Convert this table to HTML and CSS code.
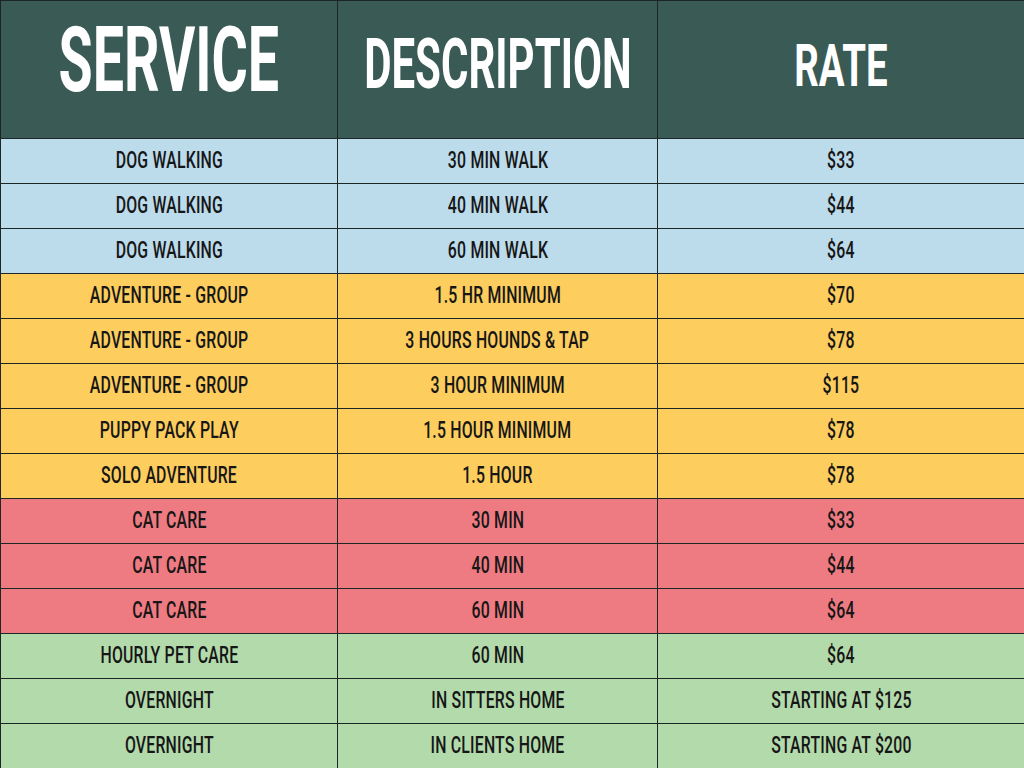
FILE: index.html
```html
<!DOCTYPE html>
<html>
<head>
<meta charset="utf-8">
<link rel="stylesheet" href="styles.css">
</head>
<body>
<div class="table">
  <div class="cell head"><span class="h h-service">SERVICE</span></div>
  <div class="cell head"><span class="h h-desc">DESCRIPTION</span></div>
  <div class="cell head last"><span class="h h-rate">RATE</span></div>

  <div class="cell blue"><span class="t">DOG WALKING</span></div>
  <div class="cell blue"><span class="t">30 MIN WALK</span></div>
  <div class="cell blue last"><span class="t">$33</span></div>

  <div class="cell blue"><span class="t">DOG WALKING</span></div>
  <div class="cell blue"><span class="t">40 MIN WALK</span></div>
  <div class="cell blue last"><span class="t">$44</span></div>

  <div class="cell blue"><span class="t">DOG WALKING</span></div>
  <div class="cell blue"><span class="t">60 MIN WALK</span></div>
  <div class="cell blue last"><span class="t">$64</span></div>

  <div class="cell yellow"><span class="t">ADVENTURE - GROUP</span></div>
  <div class="cell yellow"><span class="t">1.5 HR MINIMUM</span></div>
  <div class="cell yellow last"><span class="t">$70</span></div>

  <div class="cell yellow"><span class="t">ADVENTURE - GROUP</span></div>
  <div class="cell yellow"><span class="t">3 HOURS HOUNDS &amp; TAP</span></div>
  <div class="cell yellow last"><span class="t">$78</span></div>

  <div class="cell yellow"><span class="t">ADVENTURE - GROUP</span></div>
  <div class="cell yellow"><span class="t">3 HOUR MINIMUM</span></div>
  <div class="cell yellow last"><span class="t">$115</span></div>

  <div class="cell yellow"><span class="t">PUPPY PACK PLAY</span></div>
  <div class="cell yellow"><span class="t">1.5 HOUR MINIMUM</span></div>
  <div class="cell yellow last"><span class="t">$78</span></div>

  <div class="cell yellow"><span class="t">SOLO ADVENTURE</span></div>
  <div class="cell yellow"><span class="t">1.5 HOUR</span></div>
  <div class="cell yellow last"><span class="t">$78</span></div>

  <div class="cell red"><span class="t">CAT CARE</span></div>
  <div class="cell red"><span class="t">30 MIN</span></div>
  <div class="cell red last"><span class="t">$33</span></div>

  <div class="cell red"><span class="t">CAT CARE</span></div>
  <div class="cell red"><span class="t">40 MIN</span></div>
  <div class="cell red last"><span class="t">$44</span></div>

  <div class="cell red"><span class="t">CAT CARE</span></div>
  <div class="cell red"><span class="t">60 MIN</span></div>
  <div class="cell red last"><span class="t">$64</span></div>

  <div class="cell green"><span class="t">HOURLY PET CARE</span></div>
  <div class="cell green"><span class="t">60 MIN</span></div>
  <div class="cell green last"><span class="t">$64</span></div>

  <div class="cell green"><span class="t">OVERNIGHT</span></div>
  <div class="cell green"><span class="t">IN SITTERS HOME</span></div>
  <div class="cell green last"><span class="t">STARTING AT $125</span></div>

  <div class="cell green"><span class="t">OVERNIGHT</span></div>
  <div class="cell green"><span class="t">IN CLIENTS HOME</span></div>
  <div class="cell green last"><span class="t">STARTING AT $200</span></div>
</div>
</body>
</html>
```

FILE: styles.css
```css
html, body {
  margin: 0;
  padding: 0;
  background: #ffffff;
}

.table {
  width: 1024px;
  height: 768px;
  box-sizing: border-box;
  display: grid;
  grid-template-columns: 337px 320px 367px;
  grid-template-rows: 138px repeat(14, 45px);
  border-left: 1px solid #1c2624;
  border-top: 1px solid #1c2624;
  font-family: "Roboto", "Liberation Sans", sans-serif;
  overflow: hidden;
}

.cell {
  box-sizing: border-box;
  border-right: 1.5px solid #1c2624;
  border-bottom: 1.5px solid #1c2624;
  display: flex;
  align-items: center;
  justify-content: center;
  overflow: hidden;
  white-space: nowrap;
}

.cell.last {
  border-right: 1px solid #1c2624;
}

.head {
  background: #3a5a56;
  color: #ffffff;
  padding-bottom: 14px;
}

.blue { background: #bcdbeb; }
.yellow { background: #fdcd5d; }
.red { background: #ef7b82; }
.green { background: #b3daab; }

.t {
  display: inline-block;
  font-size: 24px;
  font-weight: 500;
  color: #161616;
  transform: scaleX(0.66);
  margin-top: -3px;
  letter-spacing: 0.3px;
}

.h {
  display: inline-block;
  font-weight: 700;
  line-height: 1;
}

.h-service {
  font-size: 91px;
  transform: scaleX(0.61);
  margin-top: -4px;
}

.h-desc {
  font-size: 70px;
  transform: scaleX(0.6);
  margin-top: 2px;
}

.h-rate {
  font-size: 59px;
  transform: scaleX(0.65);
  margin-top: 6px;
}
```
